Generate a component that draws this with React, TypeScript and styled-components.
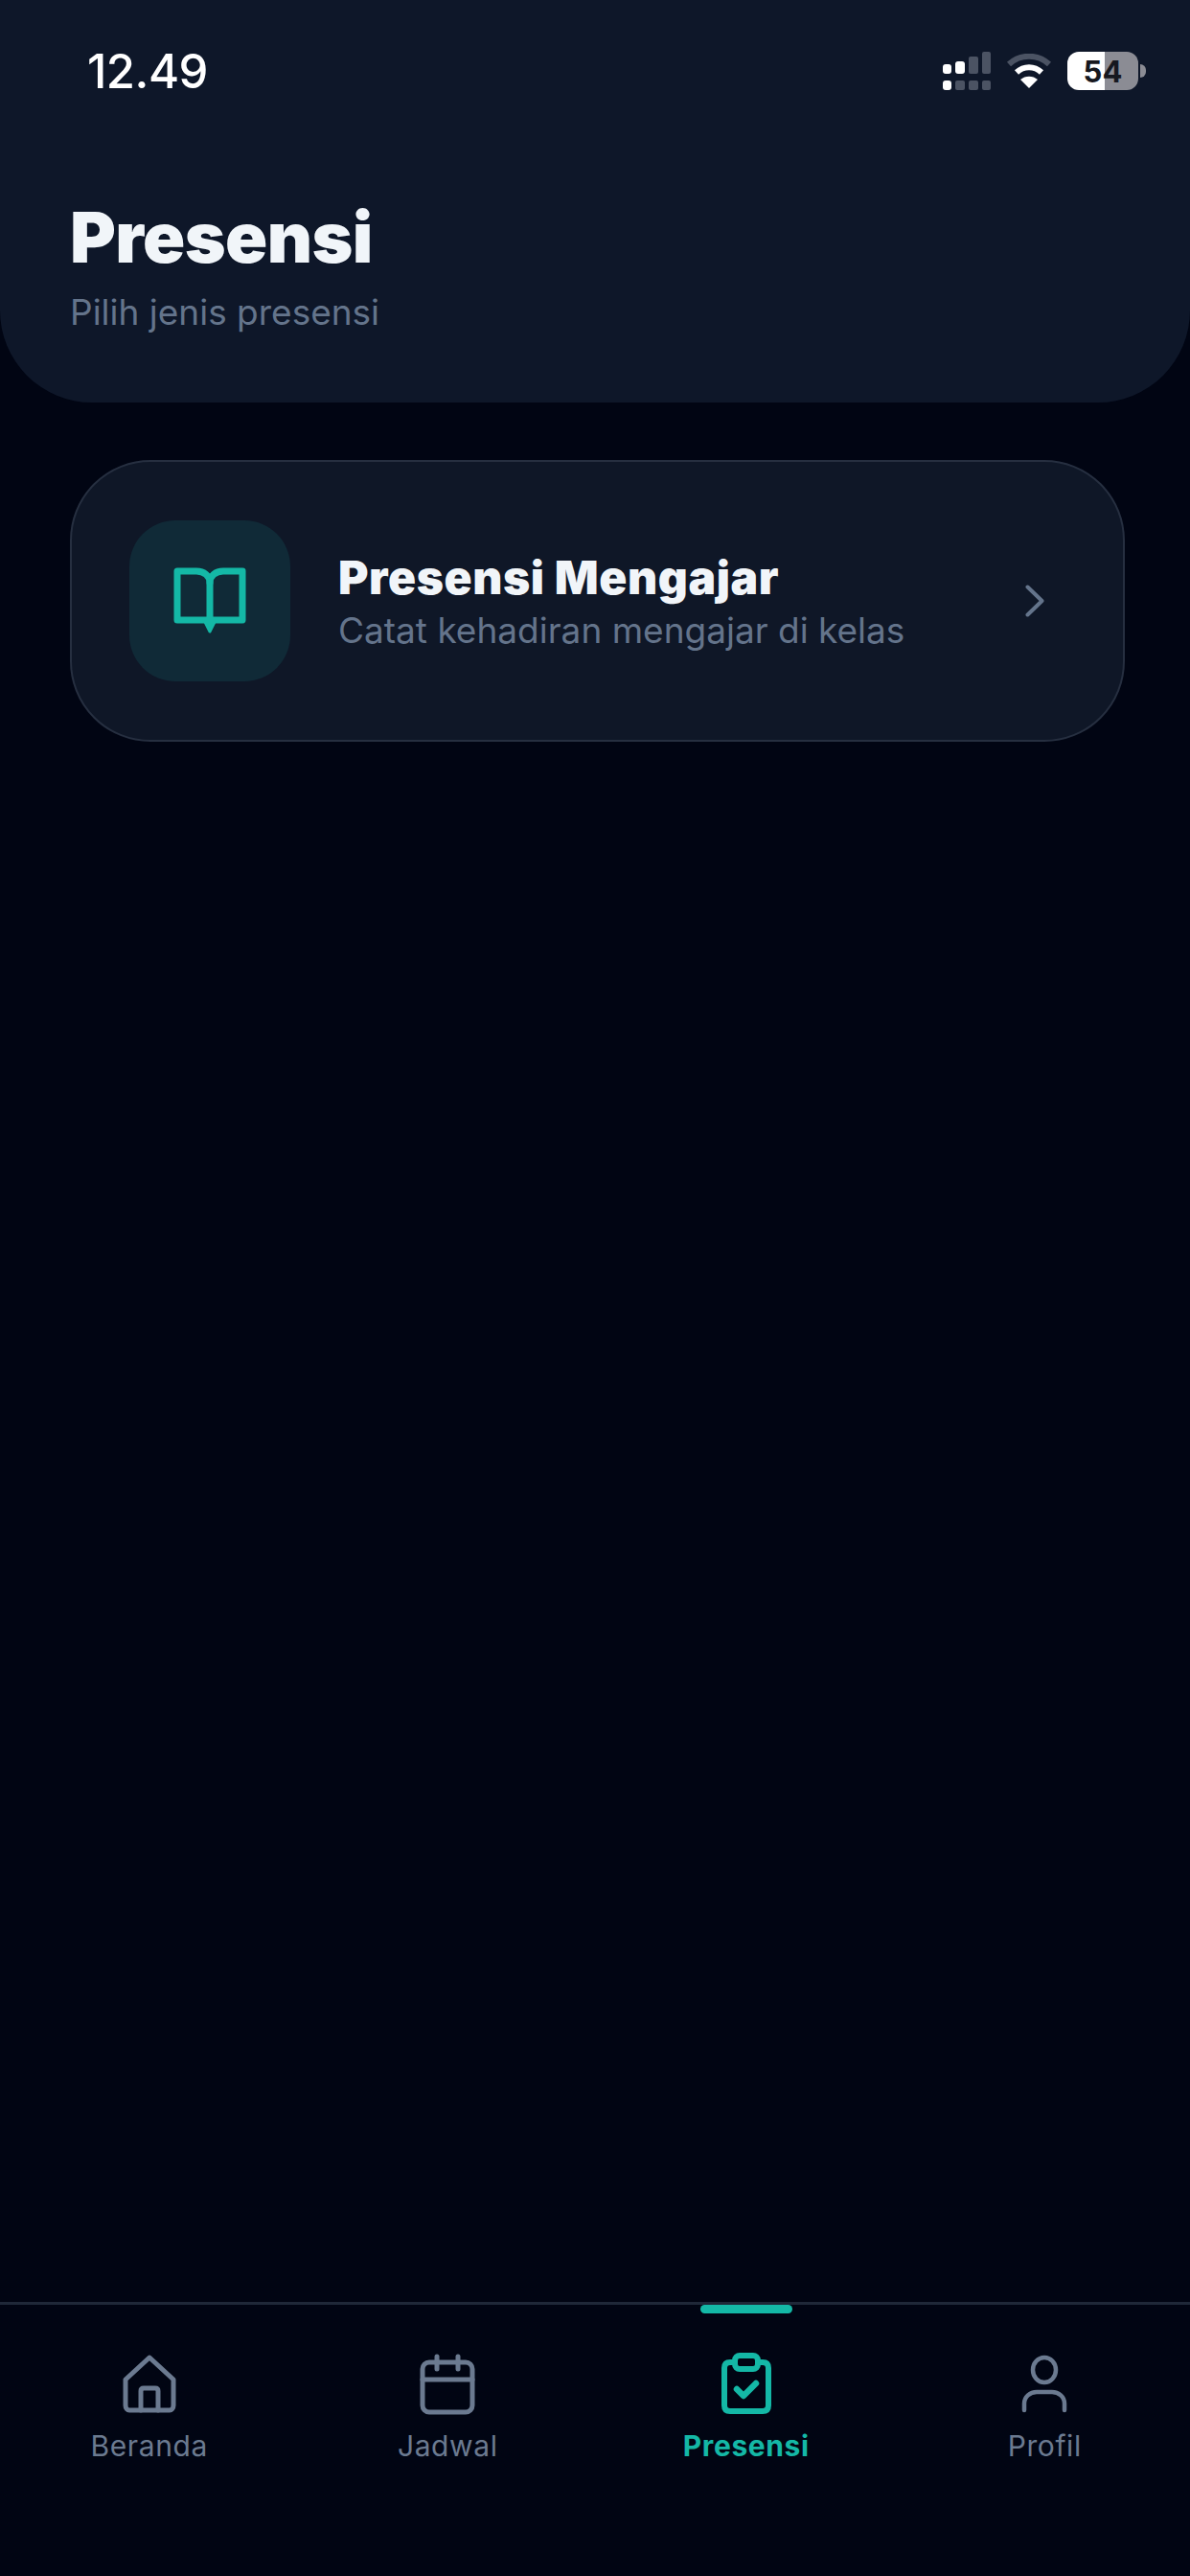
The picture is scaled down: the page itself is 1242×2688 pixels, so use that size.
import React from 'react';
import styled, { createGlobalStyle } from 'styled-components';

const GlobalStyle = createGlobalStyle`
  html, body {
    margin: 0;
    padding: 0;
    background: #00040f;
  }
  * {
    box-sizing: border-box;
  }
`;

const Screen = styled.div`
  width: 1242px;
  height: 2688px;
  display: flex;
  flex-direction: column;
  background: #010513;
  font-family: Inter, "Liberation Sans", sans-serif;
  overflow: hidden;
`;

const Header = styled.header`
  height: 420px;
  flex: none;
  display: flex;
  flex-direction: column;
  padding: 0 0 0 73px;
  background: #0e1729;
  border-radius: 0 0 96px 96px;
`;

const StatusBar = styled.div`
  height: 148px;
  margin-bottom: 58px;
  flex: none;
  display: flex;
  align-items: center;
  justify-content: space-between;
  padding: 0 46px 0 18px;
`;

const Time = styled.span`
  font-size: 49px;
  font-weight: 500;
  color: #ffffff;
  letter-spacing: -0.5px;
`;

const StatusIcons = styled.div`
  display: flex;
  align-items: center;
  gap: 16px;
`;

const Battery = styled.div`
  width: 74px;
  height: 40px;
  display: flex;
  align-items: center;
  justify-content: center;
  border-radius: 12px;
  background: linear-gradient(to right, #ffffff 53%, #8b8c94 53%);
  color: #16181f;
  font-size: 31px;
  font-weight: 700;
`;

const BatteryGroup = styled.div`
  display: flex;
  align-items: center;
  gap: 2px;
`;

const BatteryTip = styled.div`
  width: 6px;
  height: 14px;
  background: #8b8c94;
  border-radius: 0 7px 7px 0;
`;

const Title = styled.h1`
  margin: 0;
  font-size: 73px;
  line-height: 84px;
  font-weight: 900;
  color: #f1f5f9;
  letter-spacing: -0.6px;
`;

const Subtitle = styled.p`
  margin: 15px 0 0;
  font-size: 37px;
  line-height: 42px;
  color: #64748b;
`;

const Main = styled.main`
  flex: 1;
  padding: 60px 68px 0 73px;
`;

const Card = styled.div`
  height: 294px;
  display: flex;
  align-items: center;
  padding: 0 62px 0 60px;
  background: #0f1727;
  border: 2px solid #262f40;
  border-radius: 84px;
`;

const IconTile = styled.div`
  width: 168px;
  height: 168px;
  flex: none;
  display: flex;
  align-items: center;
  justify-content: center;
  border-radius: 48px;
  background: #102a37;
  color: #14b8a6;
`;

const CardText = styled.div`
  flex: 1;
  margin-left: 50px;
  display: flex;
  flex-direction: column;
`;

const CardTitle = styled.div`
  font-size: 48px;
  line-height: 56px;
  font-weight: 900;
  letter-spacing: 0.6px;
  color: #f1f5f9;
`;

const CardSubtitle = styled.div`
  margin-top: 6px;
  font-size: 37px;
  line-height: 42px;
  color: #64748b;
`;

const Chevron = styled.div`
  display: flex;
  color: #64748b;
  margin-right: 20px;
`;

const Nav = styled.nav`
  height: 286px;
  flex: none;
  display: grid;
  grid-template-columns: repeat(4, 311.5px);
  justify-content: start;
  border-top: 3px solid #1f2838;
`;

const NavItem = styled.div<{ $active?: boolean }>`
  position: relative;
  display: flex;
  flex-direction: column;
  align-items: center;
  padding-top: 47px;
  color: ${(props) => (props.$active ? '#14b8a6' : '#6b7a90')};
`;

const NavLabel = styled.span<{ $active?: boolean }>`
  margin-top: 10px;
  font-size: 30px;
  line-height: 36px;
  font-weight: ${(props) => (props.$active ? 700 : 400)};
  letter-spacing: 0.6px;
`;

const Indicator = styled.div`
  position: absolute;
  top: 0;
  left: 50%;
  margin-left: -48px;
  width: 96px;
  height: 9px;
  border-radius: 5px;
  background: #14b8a6;
`;

const SignalIcon = () => (
  <svg width="50" height="40" viewBox="0 0 50 40">
    <rect x="0" y="13" width="9" height="10" rx="3" fill="#fff" />
    <rect x="13" y="10" width="10" height="13" rx="3" fill="#fff" />
    <rect x="27" y="5" width="10" height="18" rx="2" fill="#4b5363" />
    <rect x="41" y="0" width="9" height="23" rx="2" fill="#4b5363" />
    <rect x="0" y="30" width="9" height="10" rx="3" fill="#fff" />
    <rect x="13" y="30" width="10" height="10" rx="2" fill="#4b5363" />
    <rect x="27" y="30" width="10" height="10" rx="2" fill="#4b5363" />
    <rect x="41" y="30" width="9" height="10" rx="2" fill="#4b5363" />
  </svg>
);

const WifiIcon = () => (
  <svg width="48" height="36" viewBox="0 0 48 36" fill="none" strokeWidth="6">
    <path d="M3 11C15 0 33 0 45 11" stroke="#4b5363" />
    <path d="M11 19.5C18.5 12.5 29.5 12.5 37 19.5" stroke="#fff" />
    <path d="M24 36L15 27C20 22.5 28 22.5 33 27Z" fill="#fff" strokeWidth="0" />
  </svg>
);

const BookIcon = () => (
  <svg width="78" height="72" viewBox="0 0 78 72" fill="none" stroke="currentColor" strokeWidth="7" strokeLinejoin="round" strokeLinecap="round">
    <path d="M39 56H5V5H25C33 5 39 10 39 17C39 10 45 5 53 5H73V56Z" />
    <path d="M39 17V56" />
    <path d="M34 58H44L39 68Z" fill="currentColor" strokeWidth="3" />
  </svg>
);

const ChevronIcon = () => (
  <svg width="20" height="34" viewBox="0 0 20 34" fill="none" stroke="currentColor" strokeWidth="4" strokeLinecap="round" strokeLinejoin="round">
    <path d="M2.5 2.5L17.5 17L2.5 31.5" />
  </svg>
);

const HomeIcon = () => (
  <svg width="72" height="72" viewBox="0 0 72 72" fill="none" stroke="currentColor" strokeWidth="5" strokeLinejoin="round" strokeLinecap="round">
    <path d="M36 8L61 31V58C61 61 59 63 57 63H15C13 63 11 61 11 58V31Z" />
    <path d="M27 63V43C27 41 28 40 30 40H42C44 40 45 41 45 43V63" />
  </svg>
);

const CalendarIcon = () => (
  <svg width="72" height="72" viewBox="0 0 72 72" fill="none" stroke="currentColor" strokeWidth="5" strokeLinejoin="round" strokeLinecap="round">
    <rect x="10" y="13" width="52" height="52" rx="7" />
    <path d="M10 31H62" />
    <path d="M25 7V20" />
    <path d="M47 7V20" />
  </svg>
);

const ClipboardIcon = () => (
  <svg width="72" height="72" viewBox="0 0 72 72" fill="none" stroke="currentColor" strokeWidth="6" strokeLinejoin="round" strokeLinecap="round">
    <path d="M24 13H19C15 13 13 15 13 19V58C13 62 15 64 19 64H53C57 64 59 62 59 58V19C59 15 57 13 53 13H48" />
    <rect x="24" y="6" width="24" height="14" rx="5" />
    <path d="M26 41L33 48L46 35" strokeWidth="6.5" />
  </svg>
);

const UserIcon = () => (
  <svg width="72" height="72" viewBox="0 0 72 72" fill="none" stroke="currentColor" strokeWidth="4.5" strokeLinejoin="round" strokeLinecap="round">
    <ellipse cx="36" cy="21" rx="12" ry="13" />
    <path d="M15 63V56C15 49 21 44 28 44H44C51 44 57 49 57 56V63" />
  </svg>
);

const navItems = [
  { label: 'Beranda', icon: <HomeIcon /> },
  { label: 'Jadwal', icon: <CalendarIcon /> },
  { label: 'Presensi', icon: <ClipboardIcon />, active: true },
  { label: 'Profil', icon: <UserIcon /> },
];

const App = () => {
  return (
    <Screen>
      <GlobalStyle />
      <Header>
        <StatusBar>
          <Time>12.49</Time>
          <StatusIcons>
            <SignalIcon />
            <WifiIcon />
            <BatteryGroup>
              <Battery>54</Battery>
              <BatteryTip />
            </BatteryGroup>
          </StatusIcons>
        </StatusBar>
        <Title>Presensi</Title>
        <Subtitle>Pilih jenis presensi</Subtitle>
      </Header>
      <Main>
        <Card>
          <IconTile>
            <BookIcon />
          </IconTile>
          <CardText>
            <CardTitle>Presensi Mengajar</CardTitle>
            <CardSubtitle>Catat kehadiran mengajar di kelas</CardSubtitle>
          </CardText>
          <Chevron>
            <ChevronIcon />
          </Chevron>
        </Card>
      </Main>
      <Nav>
        {navItems.map((item) => (
          <NavItem key={item.label} $active={item.active}>
            {item.active && <Indicator />}
            {item.icon}
            <NavLabel $active={item.active}>{item.label}</NavLabel>
          </NavItem>
        ))}
      </Nav>
    </Screen>
  );
};

export default App;
